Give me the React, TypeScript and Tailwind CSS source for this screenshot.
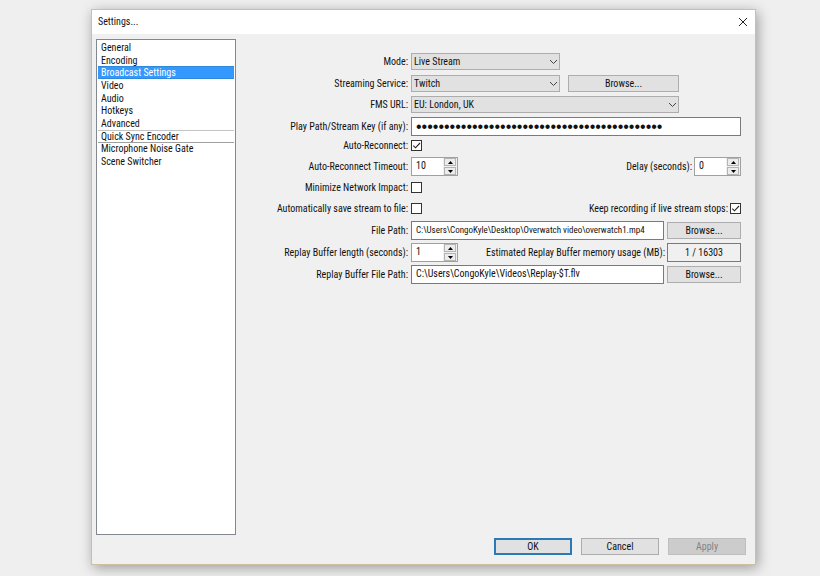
import { useState } from 'react';
import type { ReactNode } from 'react';

const pages = [
  'General',
  'Encoding',
  'Broadcast Settings',
  'Video',
  'Audio',
  'Hotkeys',
  'Advanced',
  'Quick Sync Encoder',
  'Microphone Noise Gate',
  'Scene Switcher',
];

const button = 'h-[17px] shrink-0 border border-[#adadad] bg-[#e1e1e1] text-center leading-[15px]';
const field = 'h-[19px] border border-[#7a7a7a] bg-white px-[4px] text-[#111] outline-none';

function Row({ label, id, className = '', children }: { label: string; id: string; className?: string; children: ReactNode }) {
  return (
    <div className={`flex items-center gap-[3px] ${className}`}>
      <label htmlFor={id} className="w-[172px] shrink-0 text-right whitespace-nowrap">{label}</label>
      <div className="flex min-w-0 flex-1 items-center">{children}</div>
    </div>
  );
}

function Dropdown({ id, value, className }: { id: string; value: string; className: string }) {
  return (
    <div className={`relative ${className}`}>
      <select id={id} defaultValue={value} className="block h-[17px] w-full appearance-none border border-[#adadad] bg-[#e1e1e1] pl-[2px] pr-4 leading-[15px] outline-none">
        <option>{value}</option>
      </select>
      <svg viewBox="0 0 9 6" className="pointer-events-none absolute top-[6px] right-[2px] h-[6px] w-[9px]" fill="none" stroke="#444" strokeWidth="1">
        <path d="M1 1l3.5 3.5L8 1" />
      </svg>
    </div>
  );
}

function Tick({ id, checked = false }: { id: string; checked?: boolean }) {
  return (
    <span className="relative block size-[11px] shrink-0">
      <input id={id} type="checkbox" defaultChecked={checked} className="peer block size-[11px] appearance-none border border-[#333] bg-white" />
      <svg viewBox="0 0 11 11" className="pointer-events-none invisible absolute inset-0 size-[11px] peer-checked:visible" fill="none" stroke="#222" strokeWidth="1.1">
        <path d="M2.3 5.6l2.2 2.2L9 3" />
      </svg>
    </span>
  );
}

function Spinner({ id, start }: { id: string; start: number }) {
  const [value, setValue] = useState(start);
  const step = 'flex h-[8px] w-[12px] items-center justify-center border border-[#b4b4b4] bg-[#ececec]';
  return (
    <div className="flex h-[19px] w-[47px] shrink-0 border border-[#a0a0a0] bg-[#f0f0f0]">
      <input
        id={id}
        inputMode="numeric"
        value={value}
        onChange={(e) => setValue(Number(e.target.value) || 0)}
        className="min-w-0 flex-1 bg-white pb-[2px] pl-[4px] text-[#111] outline-none"
      />
      <div className="flex flex-col justify-between px-px">
        <button type="button" aria-label="Increase" onClick={() => setValue(value + 1)} className={step}>
          <svg viewBox="0 0 5 3" className="h-[3px] w-[5px]"><path d="M0 3L2.5 0L5 3z" /></svg>
        </button>
        <button type="button" aria-label="Decrease" onClick={() => setValue(Math.max(0, value - 1))} className={step}>
          <svg viewBox="0 0 5 3" className="h-[3px] w-[5px]"><path d="M0 0L2.5 3L5 0z" /></svg>
        </button>
      </div>
    </div>
  );
}

export default function App() {
  const [page, setPage] = useState('Broadcast Settings');
  return (
    <main className="flex min-h-screen bg-[#efefef] pt-[9px] pr-16 pb-[11px] pl-[91px] font-['Roboto_Condensed','Liberation_Sans',sans-serif] text-[10px] leading-[13px] text-[#111]">
      <section className="flex min-w-0 flex-1 flex-col border border-[#cdbf9f] bg-[#f0f0f0] shadow-[2px_3px_12px_0_rgba(0,0,0,0.35)]">
        <header className="flex h-[24px] shrink-0 items-center justify-between bg-white pr-[7px] pb-px pl-[6px]">
          <h1>Settings...</h1>
          <button type="button" aria-label="Close">
            <svg viewBox="0 0 10 10" className="size-[10px]" stroke="#222" strokeWidth="1"><path d="M1 1l8 8M9 1l-8 8" /></svg>
          </button>
        </header>

        <div className="flex flex-1 pl-[4px]">
          <nav className="mt-[5px] mb-[29px] w-[140px] shrink-0 border border-[#828790] bg-white p-px">
            <ul className="grid h-[127px] grid-rows-10">
              {pages.map((name) => (
                <li key={name} className="flex">
                  <button
                    type="button"
                    onClick={() => setPage(name)}
                    className={`flex w-full items-center border-y pl-[3px] ${
                      name === page
                        ? 'border-[#3088dc] bg-[#3399ff] text-white'
                        : name === 'Quick Sync Encoder'
                          ? 'border-t-[#c4c4c4] border-b-[#a0a0a0]'
                          : 'border-transparent'
                    }`}
                  >
                    {name}
                  </button>
                </li>
              ))}
            </ul>
          </nav>

          <div className="flex min-w-0 flex-1 flex-col pt-[19px] pb-[9px]">
            <form className="pr-[14px]" onSubmit={(e) => e.preventDefault()}>
              <Row id="mode" label="Mode:">
                <Dropdown id="mode" value="Live Stream" className="w-[149px]" />
              </Row>
              <Row id="service" label="Streaming Service:" className="mt-[5px]">
                <Dropdown id="service" value="Twitch" className="w-[149px]" />
                <button type="button" className={`${button} ml-[8px] w-[111px]`}>Browse...</button>
              </Row>
              <Row id="fms" label="FMS URL:" className="mt-[4px]">
                <Dropdown id="fms" value="EU: London, UK" className="w-[268px]" />
              </Row>
              <Row id="key" label="Play Path/Stream Key (if any):" className="mt-[4px]">
                <input id="key" type="password" defaultValue="live_000000000000000000000000000000000000000" className={`${field} w-full font-['Liberation_Sans',sans-serif] text-[16px]`} />
              </Row>
              <Row id="reconnect" label="Auto-Reconnect:" className="h-[19px]">
                <Tick id="reconnect" checked />
              </Row>
              <Row id="timeout" label="Auto-Reconnect Timeout:" className="mt-[2px]">
                <Spinner id="timeout" start={10} />
                <label htmlFor="delay" className="mr-[2px] ml-auto">Delay (seconds):</label>
                <Spinner id="delay" start={0} />
              </Row>
              <Row id="network" label="Minimize Network Impact:" className="mt-[2px] h-[19px]">
                <Tick id="network" />
              </Row>
              <Row id="save" label="Automatically save stream to file:" className="mt-[2px] h-[19px]">
                <Tick id="save" />
                <label htmlFor="keep" className="mr-[2px] ml-auto">Keep recording if live stream stops:</label>
                <Tick id="keep" checked />
              </Row>
              <Row id="path" label="File Path:" className="mt-[3px]">
                <input id="path" defaultValue="C:\Users\CongoKyle\Desktop\Overwatch video\overwatch1.mp4" className={`${field} min-w-0 flex-1 pb-[2px] text-[9px]`} />
                <button type="button" className={`${button} ml-[3px] w-[74px]`}>Browse...</button>
              </Row>
              <Row id="buffer" label="Replay Buffer length (seconds):" className="mt-[3px]">
                <Spinner id="buffer" start={1} />
                <label htmlFor="memory" className="mr-[2px] ml-auto">Estimated Replay Buffer memory usage (MB):</label>
                <input id="memory" readOnly defaultValue="1 / 16303" className="h-[19px] w-[74px] shrink-0 border border-[#7a7a7a] bg-[#f0f0f0] pb-px text-center outline-none" />
              </Row>
              <Row id="replay" label="Replay Buffer File Path:" className="mt-[3px]">
                <input id="replay" defaultValue="C:\Users\CongoKyle\Videos\Replay-$T.flv" className={`${field} min-w-0 flex-1 pb-[2px] text-[10px]`} />
                <button type="button" className={`${button} ml-[3px] w-[74px]`}>Browse...</button>
              </Row>
            </form>

            <footer className="mt-auto flex justify-end gap-[9px] pr-[9px]">
              <button type="button" className="h-[17px] w-[78px] border-2 border-[#2a7ab8] bg-[#e1e1e1] leading-[13px]">OK</button>
              <button type="button" className={`${button} w-[78px]`}>Cancel</button>
              <button type="button" disabled className="h-[17px] w-[78px] border border-[#bfbfbf] bg-[#cccccc] leading-[15px] text-[#838383]">Apply</button>
            </footer>
          </div>
        </div>
      </section>
    </main>
  );
}
